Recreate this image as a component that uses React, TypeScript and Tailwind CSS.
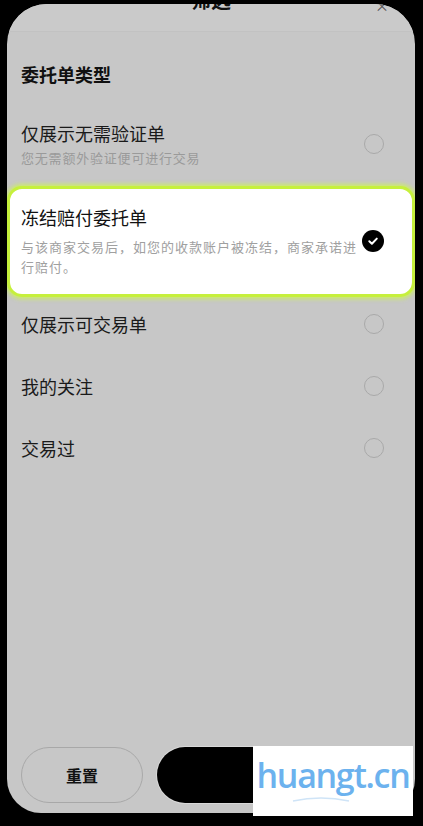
import React from "react";

const cjk = { fontFamily: '"Noto Sans CJK SC", "Noto Sans", sans-serif' };

function Radio() {
  return <span className="block w-[20px] h-[20px] rounded-full border-[1.5px] border-[#a9a9a9]" />;
}

function Checked() {
  return (
    <span className="flex w-[22px] h-[22px] rounded-full bg-black items-center justify-center">
      <svg width="12" height="12" viewBox="0 0 12 12" fill="none">
        <path d="M2.3 6.2 L4.9 8.7 L9.8 3.6" stroke="white" strokeWidth="2" strokeLinecap="round" strokeLinejoin="round" />
      </svg>
    </span>
  );
}

function PlainRow({ label, mt }: { label: string; mt: string }) {
  return (
    <div className={`flex items-center justify-between pl-[14px] pr-[31px] ${mt}`}>
      <span className="text-[18px] leading-[26px] text-[#1a1a1a]">{label}</span>
      <Radio />
    </div>
  );
}

export default function App() {
  return (
    <div className="relative w-[423px] h-[826px] bg-black overflow-hidden" style={cjk}>
      <div className="ml-[7px] mt-[4px] w-[408px] h-[809px] rounded-t-[40px] rounded-b-[34px] bg-[#c7c7c7] flex flex-col overflow-hidden">
        {/* sheet header */}
        <div className="relative h-[28px] bg-[#cacaca] border-b border-[#c2c2c2] flex justify-center">
          <span className="mt-[-18px] text-[20px] leading-[28px] font-bold text-[#111]">筛选</span>
          <span className="absolute right-[26px] top-[-6px] text-[14px] leading-[14px] text-[#555]">×</span>
        </div>

        <div className="mt-[29px] pl-[14px] text-[18px] leading-[26px] font-bold text-[#111]">委托单类型</div>

        {/* no-verification option */}
        <div className="mt-[34px] flex items-center justify-between pl-[14px] pr-[31px]">
          <div className="flex flex-col">
            <span className="text-[18px] leading-[24px] text-[#1a1a1a]">仅展示无需验证单</span>
            <span className="mt-[4px] text-[13px] leading-[18px] tracking-[0.8px] text-[#9a9a9a]">您无需额外验证便可进行交易</span>
          </div>
          <Radio />
        </div>

        {/* selected option */}
        <div className="mt-[19px] rounded-[15px] border-[3px] border-[#c6f03c] bg-white shadow-[0_0_4px_2px_rgba(205,245,80,0.8)] pl-[11px] pr-[28px] pt-[15px] pb-[17px] flex items-center justify-between">
          <div className="flex flex-col">
            <span className="text-[18px] leading-[26px] text-[#111]">冻结赔付委托单</span>
            <span className="mt-[7px] w-[340px] text-[13px] leading-[20px] tracking-[1px] text-[#a0a0a0]">
              与该商家交易后，如您的收款账户被冻结，商家承诺进行赔付。
            </span>
          </div>
          <Checked />
        </div>

        <PlainRow label="仅展示可交易单" mt="mt-[14px]" />
        <PlainRow label="我的关注" mt="mt-[36px]" />
        <PlainRow label="交易过" mt="mt-[36px]" />

        <div className="flex-1" />

        {/* action buttons */}
        <div className="flex gap-[14px] px-[14px] mb-[10px]">
          <button className="w-[122px] h-[56px] rounded-full border-[1.5px] border-[#a8a8a8] flex items-center justify-center text-[16px] font-bold text-[#111]">
            重置
          </button>
          <button className="flex-1 h-[56px] rounded-full bg-black ring-1 ring-[#d8d8d8]" />
        </div>
      </div>

      {/* site watermark */}
      <div className="absolute left-[253px] top-[746px] w-[160px] h-[70px] bg-white flex flex-col items-center">
        <span
          className="mt-[9px] text-[34px] leading-[40px] font-semibold tracking-[-1.3px] text-[#6cb2ee]"
          style={{ fontFamily: '"Open Sans", "Noto Sans", sans-serif' }}
        >
          huangt.cn
        </span>
        <svg className="absolute left-[38px] top-[50px]" width="60" height="6" viewBox="0 0 60 6">
          <path d="M2 5 Q30 -1 58 5" stroke="#cfe4f7" strokeWidth="1.6" fill="none" />
        </svg>
      </div>
    </div>
  );
}
